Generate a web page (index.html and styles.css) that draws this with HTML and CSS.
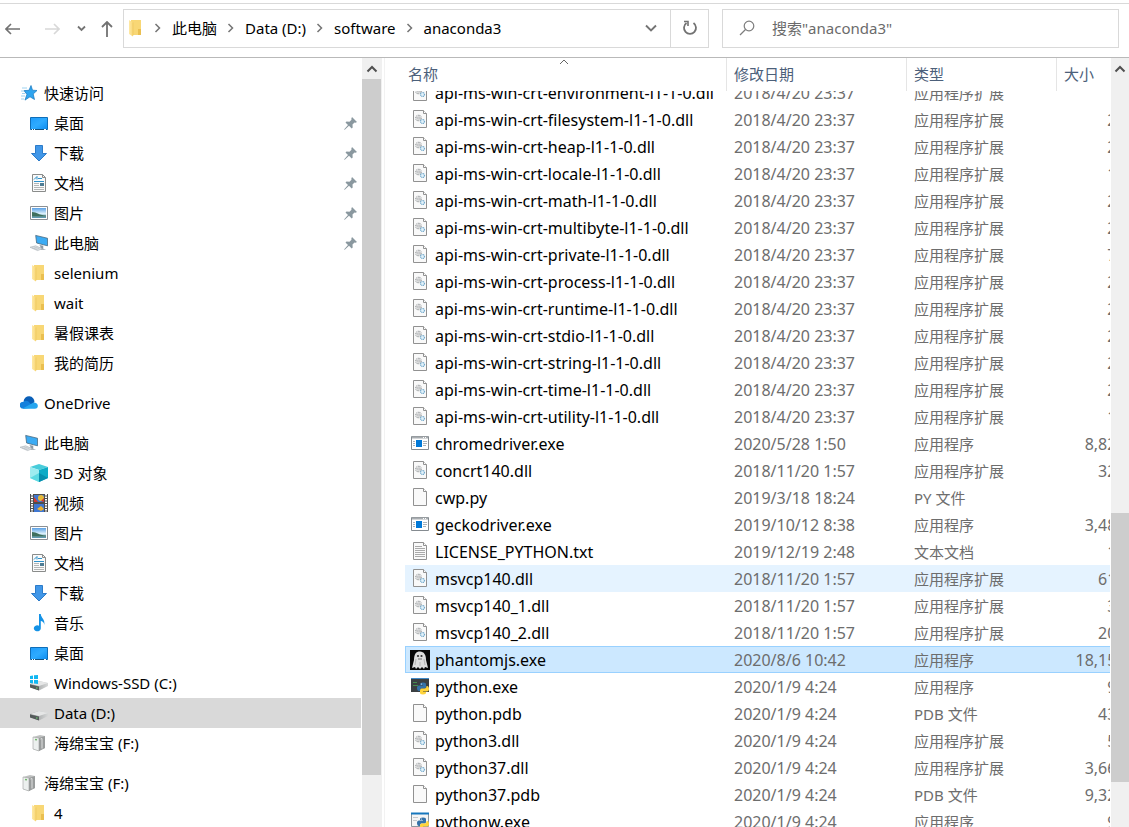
FILE: index.html
```html
<!DOCTYPE html>
<html lang="zh-CN">
<head>
<meta charset="utf-8">
<title>anaconda3</title>
<link rel="stylesheet" href="styles.css">
</head>
<body>
<svg class="sprite" aria-hidden="true">
  <defs>
    <linearGradient id="g-blue" x1="0" y1="0" x2="1" y2="1"><stop offset="0" stop-color="#1e9bfb"/><stop offset=".5" stop-color="#2eabff"/><stop offset="1" stop-color="#0c8cf0"/></linearGradient>
    <linearGradient id="g-folder" x1="0" x2="1"><stop offset="0" stop-color="#ffe9a6"/><stop offset="1" stop-color="#f8d775"/></linearGradient>
    <linearGradient id="g-photo" x1="0" y1="0" x2="0" y2="1"><stop offset="0" stop-color="#5aa0e6"/><stop offset=".55" stop-color="#d9effa"/><stop offset="1" stop-color="#4f8fa8"/></linearGradient>
    <linearGradient id="g-drive" x1="0" x2="1"><stop offset="0" stop-color="#8d8f90"/><stop offset="1" stop-color="#d6d8d8"/></linearGradient>
    <symbol id="i-star" viewBox="0 0 18 18"><path d="M11 1.500l1.500 4.700 4.500.3-3.800 3.500 1.300 5.500-4.500-2.700-5 3.300 1.900-5.700L4 6.600l5-.3z" fill="#2ea4ef" stroke="#1475bd" stroke-width=".7"/><path d="M2 4h5M1 7h3M2 9.500h3M1 12h4M1 15h3" stroke="#9dd2f0"/></symbol>
    <symbol id="i-desktop" viewBox="0 0 18 18"><path d="M.5 3.500h17v12H.5z" fill="url(#g-blue)" stroke="#0f6eb8"/><path d="M1 15.500h16" stroke="#12507d"/><path d="M2 15.500h1M4 15.500h1M14 15.500h2" stroke="#fff"/></symbol>
    <symbol id="i-down" viewBox="0 0 18 18"><path d="M5.500 1.500h7v8h4L9 17 1.500 9.500h4z" fill="#4197e8" stroke="#2c7bc9"/></symbol>
    <symbol id="i-doc" viewBox="0 0 18 18"><path d="M2.500.5h10l3 3v14h-13z" fill="#fafafa" stroke="#8a8c8b"/><path d="M12.500.5v3h3" fill="none" stroke="#8a8c8b"/><path d="M4 5.500l3-3v3M8 4.500h4M4 7.500h10" stroke="#2e91c9" fill="none"/><path d="M4 9.500h5M4 11.500h5M4 13.500h10M4 15.500h10" stroke="#b4b6b6"/><path d="M10 9h4v3h-4z" fill="#4e7c94"/></symbol>
    <symbol id="i-picture" viewBox="0 0 18 18"><path d="M.5 2.500h17v13H.5z" fill="#fff" stroke="#8b8f93"/><path d="M2 4h14v10H2z" fill="url(#g-photo)"/><path d="M2 8c5 0 6 3 14 3.500v1H2z" fill="#3f705d"/></symbol>
    <symbol id="i-pc" viewBox="0 0 19 18"><path d="M6 1l12.500 3v8L7 9z" fill="#3cabf3" stroke="#46647a" stroke-width=".8"/><path d="M10 11l4 1v3l3 1h-6v-3z" fill="#8e9aa3"/><path d="M0 13.500l6-1.500 7 3-5 2z" fill="#dfe3e6" stroke="#aeb5ba" stroke-width=".7"/><path d="M2 14l6 2M4 13l6 2" stroke="#aeb5ba" stroke-width=".6"/></symbol>
    <symbol id="i-folder" viewBox="0 0 18 18"><path d="M4 1h10v15H4z" fill="#f8d775"/><path d="M11 10h3v6h-3z" fill="#eabf50"/><path d="M2 1l4 2.500v14L2 15z" fill="url(#g-folder)"/><path d="M6 3.500v13" stroke="#edc45d" stroke-width=".7"/></symbol>
    <symbol id="i-cloud" viewBox="0 0 20 18"><path d="M4 7a6 6 0 0 1 12 1l-4 4z" fill="#0a5fb8"/><path d="M4 15.500a4 4 0 0 1-.5-8A6 6 0 0 1 9 7l7 7z" fill="#1480dc"/><path d="M3 15l11-6a5 5 0 0 1 2-.5c5 .5 5 7 .5 7H5z" fill="#25a5ef"/></symbol>
    <symbol id="i-cube" viewBox="0 0 18 18"><path d="M0 3l9-3 9 3-9 3z" fill="#48ccda"/><path d="M0 3l9 3v12l-9-4z" fill="#9decf0"/><path d="M18 3L9 6v12l9-4z" fill="#0dabc6"/><path d="M0 14l9-5v9z" fill="#5cdae2"/><path d="M18 14L9 9v9z" fill="#078fae"/></symbol>
    <symbol id="i-video" viewBox="0 0 18 18"><path d="M0 0h18v18H0z" fill="#4e4e4e"/><path d="M4 1h10v7H4zM4 10h10v8H4z" fill="#3f77d2"/><path d="M2 0v18M16 0v18" stroke="#fff" stroke-width="2" stroke-dasharray="1.500 1"/><circle cx="11" cy="4" r="3" fill="#e5b938"/><path d="M4 3l4 5H4zM11 7l3-3v4z" fill="#d33830"/><path d="M7 15l4-3 3 3-3 2z" fill="#eeb22d"/></symbol>
    <symbol id="i-music" viewBox="0 0 18 18"><path d="M9 0h1.800c.2 4 4.500 5 3.500 11-.3-3-2-4-3.500-4v7.500A3.500 3 0 1 1 9 11.700z" fill="#1492e6"/></symbol>
    <symbol id="i-drive" viewBox="0 0 18 18"><path d="M0 10l9-3 9 2v3l-9 4.500L0 13z" fill="url(#g-drive)"/><path d="M0 10l9-3 9 2-9 3z" fill="#e5e6e6"/><path d="M0 10.500l9 2v4L0 13.500z" fill="#555b5b"/><path d="M6 14h1.500" stroke="#6ddb71"/></symbol>
    <symbol id="i-windrive" viewBox="0 0 18 18"><use href="#i-drive"/><path d="M0 2l3-.5V5H0zM4 1.300L8 1v4H4zM0 6h3v3.500L0 9zM4 6h4v4l-4-.5z" fill="#12b7f2"/></symbol>
    <symbol id="i-box" viewBox="0 0 18 18"><path d="M3 3l7-2 5 1v12l-6 3-6-2z" fill="#bfc1c1"/><path d="M3 3l6 1v13l-6-2z" fill="#edf0ef" stroke="#9da09f" stroke-width=".6"/><path d="M9 4l6-2v12l-6 3z" fill="#999c9c"/><path d="M10.500 5l1.500-.5v10" stroke="#e1e2e2" fill="none"/><path d="M5 5.500l2 .3" stroke="#71b76d" stroke-width="1.500"/></symbol>
    <symbol id="i-page" viewBox="0 0 18 18"><path d="M2.500.5h10l3 3v14h-13z" fill="#f9f9f9" stroke="#919191"/><path d="M12.500.5v3h3" fill="#fff" stroke="#919191"/></symbol>
    <symbol id="i-dll" viewBox="0 0 18 18"><use href="#i-page"/><circle cx="7.500" cy="8" r="2.600" fill="none" stroke="#9b9fa1" stroke-width="1.400" stroke-dasharray="1 .6"/><circle cx="7.500" cy="8" r="1" fill="none" stroke="#969a9c" stroke-width=".7"/><circle cx="11.500" cy="11.500" r="2" fill="#e2f2fb" stroke="#73a9cb" stroke-width="1.200" stroke-dasharray="1 .5"/></symbol>
    <symbol id="i-text" viewBox="0 0 18 18"><use href="#i-page"/><path d="M4 4.500h7M4 6.500h10M4 8.500h10M4 10.500h10M4 12.500h10M4 14.500h10" stroke="#a9a9a9"/></symbol>
    <symbol id="i-exe" viewBox="0 0 18 18"><path d="M.5 2.500h17v13H.5z" fill="#fff" stroke="#858b90"/><path d="M1 3.500h16" stroke="#a8adb1" stroke-width="2"/><path d="M12 3.500h4" stroke="#fff" stroke-dasharray="1"/><path d="M5 6h6v7H5z" fill="#0078d7"/><path d="M2 7.500h2M2 9.500h2M2 11.500h2M12 7.500h4M12 9.500h4M12 11.500h3" stroke="#aab2b8"/></symbol>
    <symbol id="i-ghost" viewBox="0 0 20 20"><path d="M0 0h20v20H0z" fill="#080808"/><path d="M2 18l2-8C4 4 6 1.500 10 1.500S16 5 16 10l2 8-3-1-1 2-2-2-2 2-2-2-2 2-1-2z" fill="#dedede"/><path d="M6 9l-1 6M14 9l1 6M10 12v4" stroke="#b5b5b5"/><circle cx="8" cy="6" r="1.100" fill="#333"/><circle cx="11.500" cy="6" r="1.100" fill="#333"/><path d="M8 9h4" stroke="#777"/></symbol>
    <symbol id="i-snake" viewBox="0 0 12 12"><path d="M6 0c2.500 0 3 .8 3 2v2.500C9 6 8 6 7 6H4.500C3.500 6 3 7 3 8.500H2C.5 8.500 0 7 0 5.500S.7 3 2 3h4v-.5H3V2C3 .8 3.500 0 6 0z" fill="#3472a8"/><path d="M6 12c-2.500 0-3-.8-3-2V8c0-1.500 1-2 2-2h2.500C9 6 9.500 5 9.500 3.500h.5c1.500 0 2 1.500 2 3S11.300 9 10 9H6v.5h3v.5c0 1.200-.5 2-3 2z" fill="#ffd43b"/><circle cx="4.500" cy="1.500" r=".5" fill="#fff"/></symbol>
    <symbol id="i-python" viewBox="0 0 18 18"><path d="M0 1h18v14H0z" fill="#3a3f42"/><path d="M0 1.500h18" stroke="#4089c7"/><path d="M2 5.500h4M2 8.500h5" stroke="#458c4e"/><use href="#i-snake" x="6" y="5" width="12" height="13"/></symbol>
    <symbol id="i-pythonw" viewBox="0 0 18 18"><path d="M.5 1.500h17v13H.5z" fill="#f5f5f5" stroke="#8d969c"/><path d="M0 1.500h18" stroke="#1677bd" stroke-width="2"/><path d="M2 5.500h5M2 8.500h4" stroke="#c6c9cb"/><use href="#i-snake" x="6" y="5" width="12" height="13"/></symbol>
    <symbol id="i-pin" viewBox="0 0 13 13"><path d="M8 0l5 5-1.500.7-1-.3-2 2 .2 3-1 1-2.700-2.700L1 12.500 0 13l.5-1L4 8 1.500 5.500l1-1 3 .2 2-2-.2-1z" fill="#8a989f"/></symbol>
    <symbol id="i-crumb" viewBox="0 0 8 10"><path d="M1.500 1l4 4-4 4" fill="none" stroke="#747474" stroke-width="1.500"/></symbol>
    <symbol id="i-up" viewBox="0 0 12 8"><path d="M1.500 6.500L6 2l4.500 4.500" fill="none" stroke="#505050" stroke-width="2"/></symbol>
  </defs>
</svg>

<header class="toolbar">
  <nav class="history" aria-label="导航">
    <button class="back" aria-label="后退"><svg width="16" height="12" viewBox="0 0 16 12"><path d="M6 1L1 6l5 5M1 6h14" fill="none" stroke="#727272" stroke-width="1.600"/></svg></button>
    <button class="forward" aria-label="前进" disabled><svg width="16" height="12" viewBox="0 0 16 12"><path d="M10 1l5 5-5 5M1 6h14" fill="none" stroke="#d8d8d8" stroke-width="1.600"/></svg></button>
    <button class="recent" aria-label="最近浏览的位置"><svg width="9" height="7" viewBox="0 0 9 7"><path d="M1 1.500L4.500 5 8 1.500" fill="none" stroke="#747474" stroke-width="1.800"/></svg></button>
    <button class="parent" aria-label="向上"><svg width="12" height="16" viewBox="0 0 12 16"><path d="M1 6l5-5 5 5M6 1v15" fill="none" stroke="#727272" stroke-width="1.800"/></svg></button>
  </nav>
  <div class="address">
    <svg class="icon"><use href="#i-folder"/></svg>
    <ol class="crumbs">
      <li><svg><use href="#i-crumb"/></svg><a href="#pc">此电脑</a></li>
      <li><svg><use href="#i-crumb"/></svg><a href="#d">Data (D:)</a></li>
      <li><svg><use href="#i-crumb"/></svg><a href="#software">software</a></li>
      <li><svg><use href="#i-crumb"/></svg><a href="#anaconda3">anaconda3</a></li>
    </ol>
    <button class="previous" aria-label="以前的位置"><svg width="12" height="8" viewBox="0 0 12 8"><path d="M1 1.500l5 5 5-5" fill="none" stroke="#747474" stroke-width="1.900"/></svg></button>
    <button class="refresh" aria-label="刷新"><svg width="16" height="16" viewBox="0 0 16 16"><path d="M11.500 3a6 6 0 1 1-7 0" fill="none" stroke="#727272" stroke-width="1.800"/><path d="M2 1.500h4v4.500" fill="none" stroke="#727272" stroke-width="1.600"/></svg></button>
  </div>
  <label class="search">
    <svg width="16" height="16" viewBox="0 0 16 16"><circle cx="10" cy="6" r="4.800" fill="none" stroke="#7d7d7d" stroke-width="1.200"/><path d="M6.500 9.500L1 15" stroke="#7d7d7d" stroke-width="1.300"/></svg>
    <input type="text" aria-label="搜索" placeholder='搜索"anaconda3"'>
  </label>
</header>

<main class="panes">
  <nav class="tree" aria-label="文件夹">
    <ul>
      <li><a class="root" href="#quick"><svg class="icon"><use href="#i-star"/></svg>快速访问</a></li>
      <li><a href="#desktop"><svg class="icon"><use href="#i-desktop"/></svg>桌面<svg class="pin"><use href="#i-pin"/></svg></a></li>
      <li><a href="#downloads"><svg class="icon"><use href="#i-down"/></svg>下载<svg class="pin"><use href="#i-pin"/></svg></a></li>
      <li><a href="#documents"><svg class="icon"><use href="#i-doc"/></svg>文档<svg class="pin"><use href="#i-pin"/></svg></a></li>
      <li><a href="#pictures"><svg class="icon"><use href="#i-picture"/></svg>图片<svg class="pin"><use href="#i-pin"/></svg></a></li>
      <li><a href="#pc"><svg class="icon"><use href="#i-pc"/></svg>此电脑<svg class="pin"><use href="#i-pin"/></svg></a></li>
      <li><a href="#selenium"><svg class="icon"><use href="#i-folder"/></svg>selenium</a></li>
      <li><a href="#wait"><svg class="icon"><use href="#i-folder"/></svg>wait</a></li>
      <li><a href="#timetable"><svg class="icon"><use href="#i-folder"/></svg>暑假课表</a></li>
      <li><a href="#resume"><svg class="icon"><use href="#i-folder"/></svg>我的简历</a></li>
    </ul>
    <ul>
      <li><a class="root" href="#onedrive"><svg class="icon"><use href="#i-cloud"/></svg>OneDrive</a></li>
    </ul>
    <ul>
      <li><a class="root" href="#pc"><svg class="icon"><use href="#i-pc"/></svg>此电脑</a></li>
      <li><a href="#objects"><svg class="icon"><use href="#i-cube"/></svg>3D 对象</a></li>
      <li><a href="#videos"><svg class="icon"><use href="#i-video"/></svg>视频</a></li>
      <li><a href="#pictures"><svg class="icon"><use href="#i-picture"/></svg>图片</a></li>
      <li><a href="#documents"><svg class="icon"><use href="#i-doc"/></svg>文档</a></li>
      <li><a href="#downloads"><svg class="icon"><use href="#i-down"/></svg>下载</a></li>
      <li><a href="#music"><svg class="icon"><use href="#i-music"/></svg>音乐</a></li>
      <li><a href="#desktop"><svg class="icon"><use href="#i-desktop"/></svg>桌面</a></li>
      <li><a href="#c"><svg class="icon"><use href="#i-windrive"/></svg>Windows-SSD (C:)</a></li>
      <li><a class="current" href="#d"><svg class="icon"><use href="#i-drive"/></svg>Data (D:)</a></li>
      <li><a href="#f"><svg class="icon"><use href="#i-box"/></svg>海绵宝宝 (F:)</a></li>
    </ul>
    <ul>
      <li><a class="root" href="#f"><svg class="icon"><use href="#i-box"/></svg>海绵宝宝 (F:)</a></li>
      <li><a href="#f4"><svg class="icon"><use href="#i-folder"/></svg>4</a></li>
    </ul>
  </nav>
  <div class="scrollbar tree-scroll">
    <button aria-label="向上滚动"><svg width="12" height="8"><use href="#i-up"/></svg></button>
    <div class="track"><div class="thumb"></div></div>
  </div>

  <section class="files" aria-label="文件">
    <div class="columns">
      <button class="sorted">名称<svg width="10" height="6" viewBox="0 0 10 6"><path d="M1 5l4-4 4 4" fill="none" stroke="#666"/></svg></button>
      <button>修改日期</button>
      <button>类型</button>
      <button>大小</button>
    </div>
    <div class="viewport">
      <table>
        <colgroup><col><col class="date"><col class="type"><col class="size"></colgroup>
        <tbody>
          <tr><td><svg class="icon"><use href="#i-dll"/></svg>api-ms-win-crt-environment-l1-1-0.dll</td><td>2018/4/20 23:37</td><td>应用程序扩展</td><td>19 KB</td></tr>
          <tr><td><svg class="icon"><use href="#i-dll"/></svg>api-ms-win-crt-filesystem-l1-1-0.dll</td><td>2018/4/20 23:37</td><td>应用程序扩展</td><td>21 KB</td></tr>
          <tr><td><svg class="icon"><use href="#i-dll"/></svg>api-ms-win-crt-heap-l1-1-0.dll</td><td>2018/4/20 23:37</td><td>应用程序扩展</td><td>20 KB</td></tr>
          <tr><td><svg class="icon"><use href="#i-dll"/></svg>api-ms-win-crt-locale-l1-1-0.dll</td><td>2018/4/20 23:37</td><td>应用程序扩展</td><td>19 KB</td></tr>
          <tr><td><svg class="icon"><use href="#i-dll"/></svg>api-ms-win-crt-math-l1-1-0.dll</td><td>2018/4/20 23:37</td><td>应用程序扩展</td><td>28 KB</td></tr>
          <tr><td><svg class="icon"><use href="#i-dll"/></svg>api-ms-win-crt-multibyte-l1-1-0.dll</td><td>2018/4/20 23:37</td><td>应用程序扩展</td><td>27 KB</td></tr>
          <tr><td><svg class="icon"><use href="#i-dll"/></svg>api-ms-win-crt-private-l1-1-0.dll</td><td>2018/4/20 23:37</td><td>应用程序扩展</td><td>70 KB</td></tr>
          <tr><td><svg class="icon"><use href="#i-dll"/></svg>api-ms-win-crt-process-l1-1-0.dll</td><td>2018/4/20 23:37</td><td>应用程序扩展</td><td>20 KB</td></tr>
          <tr><td><svg class="icon"><use href="#i-dll"/></svg>api-ms-win-crt-runtime-l1-1-0.dll</td><td>2018/4/20 23:37</td><td>应用程序扩展</td><td>23 KB</td></tr>
          <tr><td><svg class="icon"><use href="#i-dll"/></svg>api-ms-win-crt-stdio-l1-1-0.dll</td><td>2018/4/20 23:37</td><td>应用程序扩展</td><td>25 KB</td></tr>
          <tr><td><svg class="icon"><use href="#i-dll"/></svg>api-ms-win-crt-string-l1-1-0.dll</td><td>2018/4/20 23:37</td><td>应用程序扩展</td><td>25 KB</td></tr>
          <tr><td><svg class="icon"><use href="#i-dll"/></svg>api-ms-win-crt-time-l1-1-0.dll</td><td>2018/4/20 23:37</td><td>应用程序扩展</td><td>21 KB</td></tr>
          <tr><td><svg class="icon"><use href="#i-dll"/></svg>api-ms-win-crt-utility-l1-1-0.dll</td><td>2018/4/20 23:37</td><td>应用程序扩展</td><td>19 KB</td></tr>
          <tr><td><svg class="icon"><use href="#i-exe"/></svg>chromedriver.exe</td><td>2020/5/28 1:50</td><td>应用程序</td><td>8,825 KB</td></tr>
          <tr><td><svg class="icon"><use href="#i-dll"/></svg>concrt140.dll</td><td>2018/11/20 1:57</td><td>应用程序扩展</td><td>325 KB</td></tr>
          <tr><td><svg class="icon"><use href="#i-page"/></svg>cwp.py</td><td>2019/3/18 18:24</td><td>PY 文件</td><td></td></tr>
          <tr><td><svg class="icon"><use href="#i-exe"/></svg>geckodriver.exe</td><td>2019/10/12 8:38</td><td>应用程序</td><td>3,485 KB</td></tr>
          <tr><td><svg class="icon"><use href="#i-text"/></svg>LICENSE_PYTHON.txt</td><td>2019/12/19 2:48</td><td>文本文档</td><td>13 KB</td></tr>
          <tr class="hover"><td><svg class="icon"><use href="#i-dll"/></svg>msvcp140.dll</td><td>2018/11/20 1:57</td><td>应用程序扩展</td><td>613 KB</td></tr>
          <tr><td><svg class="icon"><use href="#i-dll"/></svg>msvcp140_1.dll</td><td>2018/11/20 1:57</td><td>应用程序扩展</td><td>31 KB</td></tr>
          <tr><td><svg class="icon"><use href="#i-dll"/></svg>msvcp140_2.dll</td><td>2018/11/20 1:57</td><td>应用程序扩展</td><td>202 KB</td></tr>
          <tr class="selected"><td><svg class="icon thumbnail"><use href="#i-ghost"/></svg>phantomjs.exe</td><td>2020/8/6 10:42</td><td>应用程序</td><td>18,151 KB</td></tr>
          <tr><td><svg class="icon"><use href="#i-python"/></svg>python.exe</td><td>2020/1/9 4:24</td><td>应用程序</td><td>98 KB</td></tr>
          <tr><td><svg class="icon"><use href="#i-page"/></svg>python.pdb</td><td>2020/1/9 4:24</td><td>PDB 文件</td><td>436 KB</td></tr>
          <tr><td><svg class="icon"><use href="#i-dll"/></svg>python3.dll</td><td>2020/1/9 4:24</td><td>应用程序扩展</td><td>58 KB</td></tr>
          <tr><td><svg class="icon"><use href="#i-dll"/></svg>python37.dll</td><td>2020/1/9 4:24</td><td>应用程序扩展</td><td>3,662 KB</td></tr>
          <tr><td><svg class="icon"><use href="#i-page"/></svg>python37.pdb</td><td>2020/1/9 4:24</td><td>PDB 文件</td><td>9,324 KB</td></tr>
          <tr><td><svg class="icon"><use href="#i-pythonw"/></svg>pythonw.exe</td><td>2020/1/9 4:24</td><td>应用程序</td><td>97 KB</td></tr>
        </tbody>
      </table>
    </div>
  </section>
  <div class="scrollbar files-scroll">
    <button aria-label="向上滚动"><svg width="12" height="8"><use href="#i-up"/></svg></button>
    <div class="track"><div class="thumb"></div></div>
  </div>
</main>
</body>
</html>
```
FILE: styles.css
```css
* { box-sizing: border-box; }

body {
  margin: 0;
  height: 100vh;
  display: flex;
  flex-direction: column;
  overflow: hidden;
  background: #fff;
  color: #000;
  font: 15px/20px "Noto Sans", "Noto Sans CJK SC", sans-serif;
}

button {
  margin: 0;
  padding: 0;
  border: 0;
  background: none;
  font: inherit;
  color: inherit;
}

a { color: inherit; text-decoration: none; }
ul, ol { list-style: none; margin: 0; padding: 0; }
svg { display: block; flex: none; }
.sprite { position: absolute; width: 0; height: 0; }
.icon { width: 18px; height: 18px; }

/* Toolbar */
.toolbar {
  display: flex;
  flex: none;
  gap: 13px;
  margin-top: 3px;
  padding: 5px 10px 9px 5px;
  border-top: 1px solid #d9d9d9;
  border-bottom: 1px solid #b9b9b9;
}
.history { display: flex; align-items: center; flex: none; width: 105px; }
.history button { display: flex; }
.forward { margin-left: 23px; }
.recent { margin-left: 17px; }
.parent { margin-left: 15px; }

.address {
  display: flex;
  align-items: center;
  flex: 3 3 586px;
  min-width: 0;
  height: 39px;
  border: 1px solid #d9d9d9;
  padding: 0 0 1px 3px;
}
.crumbs { display: flex; gap: 10px; flex: 1; min-width: 0; overflow: hidden; padding-left: 9px; }
.crumbs li { display: flex; align-items: center; gap: 10px; white-space: nowrap; }
.crumbs svg { width: 8px; height: 10px; }
.previous, .refresh {
  display: flex;
  align-items: center;
  justify-content: center;
  flex: none;
  width: 38px;
  height: 38px;
}
.refresh { border-left: 1px solid #d9d9d9; }

.search {
  display: flex;
  align-items: center;
  gap: 17px;
  flex: 2 2 397px;
  min-width: 0;
  height: 39px;
  padding: 0 0 1px 16px;
  border: 1px solid #d9d9d9;
}
.search input {
  flex: 1;
  min-width: 0;
  padding: 0;
  border: 0;
  outline: 0;
  font: inherit;
}
.search input::placeholder { color: #6b6b6b; opacity: 1; }

/* Panes */
.panes { display: flex; flex: 1; min-height: 0; }

.tree {
  display: flex;
  flex-direction: column;
  flex: none;
  gap: 10px;
  width: 361px;
  padding-top: 20px;
  overflow: hidden;
}
.tree a {
  display: flex;
  align-items: center;
  gap: 6px;
  height: 30px;
  padding: 0 4px 0 30px;
}
.tree .root { padding-left: 20px; }
.tree .current { background: #d9d9d9; }
.pin { width: 13px; height: 13px; margin-left: auto; }

.scrollbar { display: flex; flex-direction: column; flex: none; background: #f0f0f0; }
.scrollbar button { display: flex; align-items: center; justify-content: center; height: 21px; }
.track { flex: 1; }
.thumb { background: #cdcdcd; }
.tree-scroll { width: 20px; margin-left: 1px; }
.tree-scroll .thumb { width: 19px; height: 93%; }
.files-scroll { width: 18px; }
.files-scroll .track { display: flex; flex-direction: column; }
.files-scroll .track::before { content: ""; height: 58%; }
.files-scroll .thumb { height: 36%; }

/* File list */
.files {
  display: flex;
  flex-direction: column;
  flex: 1;
  min-width: 0;
  margin: 0 1px 0 2px;
  padding-left: 20px;
  border-left: 1px solid #f2f2f2;
  overflow: hidden;
}
.columns {
  display: grid;
  grid-template-columns: 1fr 180px 150px 100px;
  flex: none;
  width: calc(100% + 46px);
  height: 33px;
  color: #4c607a;
}
.columns button { position: relative; padding: 0 0 2px 7px; text-align: left; border-left: 1px solid #e5e5e5; }
.columns .sorted { padding-left: 3px; border-left: 0; }
.sorted svg { position: absolute; top: 1px; left: calc(50% - 7px); }

.viewport { flex: 1; min-height: 0; overflow: hidden; }
table {
  width: calc(100% + 46px);
  margin-top: -12px;
  table-layout: fixed;
  border-collapse: collapse;
}
.date { width: 180px; }
.type { width: 150px; }
.size { width: 100px; }
tr { height: 27px; }
td { padding: 0 0 0 8px; color: #6d6d6d; font-size: 16px; white-space: nowrap; }
td:first-child { padding-left: 30px; color: #000; }
td:nth-child(3) { font-size: 15px; }
td:last-child { padding: 0 6px 0 0; text-align: right; }
td .icon { float: left; margin-left: -24px; }
td .thumbnail { width: 20px; height: 20px; margin-left: -25px; }
.hover { background: #e5f3ff; }
.selected { background: #cce8ff; outline: 1px solid #99d1ff; outline-offset: -1px; }
```
